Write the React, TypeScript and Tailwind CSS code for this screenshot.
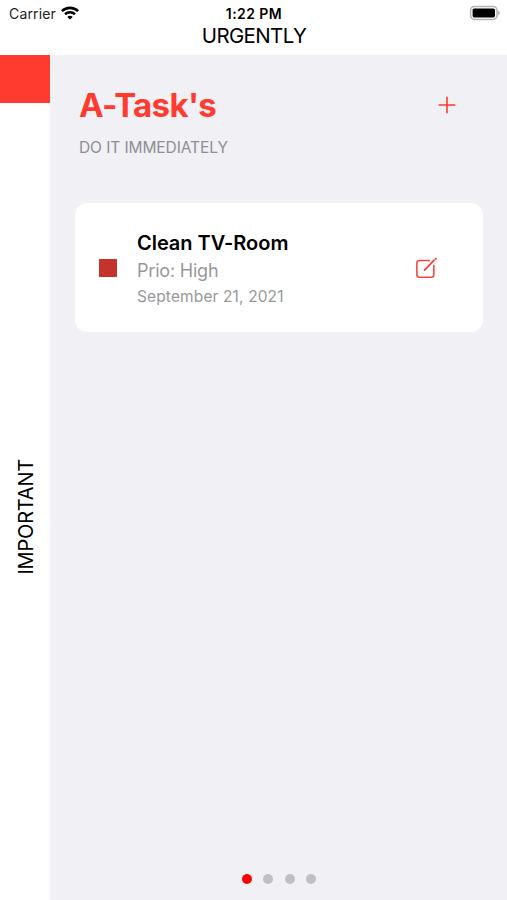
import React from 'react';

type Task = {
  id: number;
  title: string;
  prio: string;
  date: string;
};

const tasks: Task[] = [
  { id: 1, title: 'Clean TV-Room', prio: 'High', date: 'September 21, 2021' },
];

const pages = ['A', 'B', 'C', 'D'];

function WifiIcon() {
  return (
    <svg width="18" height="14" viewBox="0 0 18 14" fill="none" stroke="#000" strokeWidth="2.6">
      <path d="M0.9 5.2 C5.4 0.7 12.6 0.7 17.1 5.2" />
      <path d="M4 8.3 C6.8 5.6 11.2 5.6 14 8.3" />
      <path d="M9 13.6 L6.3 10.9 C7.8 9.5 10.2 9.5 11.7 10.9 Z" fill="#000" stroke="none" />
    </svg>
  );
}

function BatteryIcon() {
  return (
    <svg width="32" height="16" viewBox="0 0 32 16" fill="none">
      <rect x="1.6" y="1.4" width="26.4" height="13" rx="3.8" stroke="#b4b4b4" strokeWidth="1.5" />
      <rect x="3.6" y="3.4" width="22.4" height="9" rx="1.6" fill="#000" />
      <path d="M29 5.6 C31.4 6.6 31.4 9.2 29 10.2 Z" fill="#b4b4b4" />
    </svg>
  );
}

function PlusIcon() {
  return (
    <svg width="18" height="18" viewBox="0 0 18 18" stroke="#ff3b30" strokeWidth="1.6" strokeLinecap="round">
      <path d="M9 1.2 V16.8 M1.2 9 H16.8" />
    </svg>
  );
}

function EditIcon() {
  return (
    <svg width="22" height="22" viewBox="0 0 22 22" fill="none" stroke="#f5473d" strokeWidth="1.6" strokeLinecap="round">
      <path d="M13.2 3.5 H3.6 C1.8 3.5 0.9 4.4 0.9 6.2 V17.6 C0.9 19.4 1.8 20.3 3.6 20.3 H15.2 C17 20.3 17.9 19.4 17.9 17.6 V8.4" />
      <path d="M8.6 13 L18.2 3.2" strokeWidth="1.8" />
      <path d="M19.8 1.8 L20 1.6" strokeWidth="2" />
    </svg>
  );
}

function TaskCard({ task }: { task: Task }) {
  return (
    <div className="flex h-[129px] w-[408px] items-center rounded-xl bg-white pl-6">
      <div className="size-[18px] bg-[#c4342b]" />
      <div className="ml-[20px] w-[279px] pt-[2px] whitespace-nowrap">
        <h2 className="text-[20px] leading-[28px] font-semibold tracking-[-0.04px] text-black">{task.title}</h2>
        <p className="text-[18px] leading-[28px] tracking-[-0.2px] text-[#98989a]">Prio: {task.prio}</p>
        <p className="text-[15.5px] leading-[23px] tracking-[0.13px] text-[#98989a]">{task.date}</p>
      </div>
      <button className="shrink-0">
        <EditIcon />
      </button>
    </div>
  );
}

export default function App() {
  return (
    <div className="flex h-[900px] w-[507px] flex-col overflow-hidden bg-white font-['Inter',sans-serif] text-black">
      <header className="h-[55px] shrink-0">
        <div className="grid h-[26px] grid-cols-3 items-center pr-[6px] pl-[9px]">
          <div className="flex items-center gap-[5px]">
            <span className="text-[14px] tracking-[0.15px] text-[#222]">Carrier</span>
            <WifiIcon />
          </div>
          <span className="pt-px pr-[2px] text-center text-[14px] font-semibold tracking-[0.45px]">1:22 PM</span>
          <div className="flex justify-end">
            <BatteryIcon />
          </div>
        </div>
        <div className="pl-px text-center text-[20.5px] leading-[20px] tracking-[-0.65px]">URGENTLY</div>
      </header>

      <div className="flex flex-1">
        {/* Eisenhower axis label */}
        <aside className="flex w-[50px] flex-col items-center">
          <div className="h-[48px] w-full bg-[#ff3b30]" />
          <div className="mt-[356px] ml-px rotate-180 text-[20px] leading-[20px] tracking-[-0.2px] [writing-mode:vertical-rl]">
            IMPORTANT
          </div>
        </aside>

        <main className="flex flex-1 flex-col bg-[#f0f0f5] pl-[25px]">
          <div className="flex items-center justify-between pt-[30px] pr-[51px] pl-[4px]">
            <h1 className="text-[33px] leading-[40px] font-bold tracking-[-0.65px] text-[#ff3b30]">A-Task's</h1>
            <button>
              <PlusIcon />
            </button>
          </div>
          <p className="mt-[11px] pl-[4px] text-[15.5px] leading-[24px] tracking-[-0.08px] text-[#8e8e93]">
            DO IT IMMEDIATELY
          </p>

          <div className="mt-[43px]">
            {tasks.map((task) => (
              <TaskCard key={task.id} task={task} />
            ))}
          </div>

          <div className="mt-auto mb-[16px] flex gap-[11.6px] pl-[166.5px]">
            {pages.map((page, index) => (
              <span
                key={page}
                className={index === 0 ? 'size-[10px] rounded-full bg-[#ff0000]' : 'size-[10px] rounded-full bg-[#bfbfc4]'}
              />
            ))}
          </div>
        </main>
      </div>
    </div>
  );
}
